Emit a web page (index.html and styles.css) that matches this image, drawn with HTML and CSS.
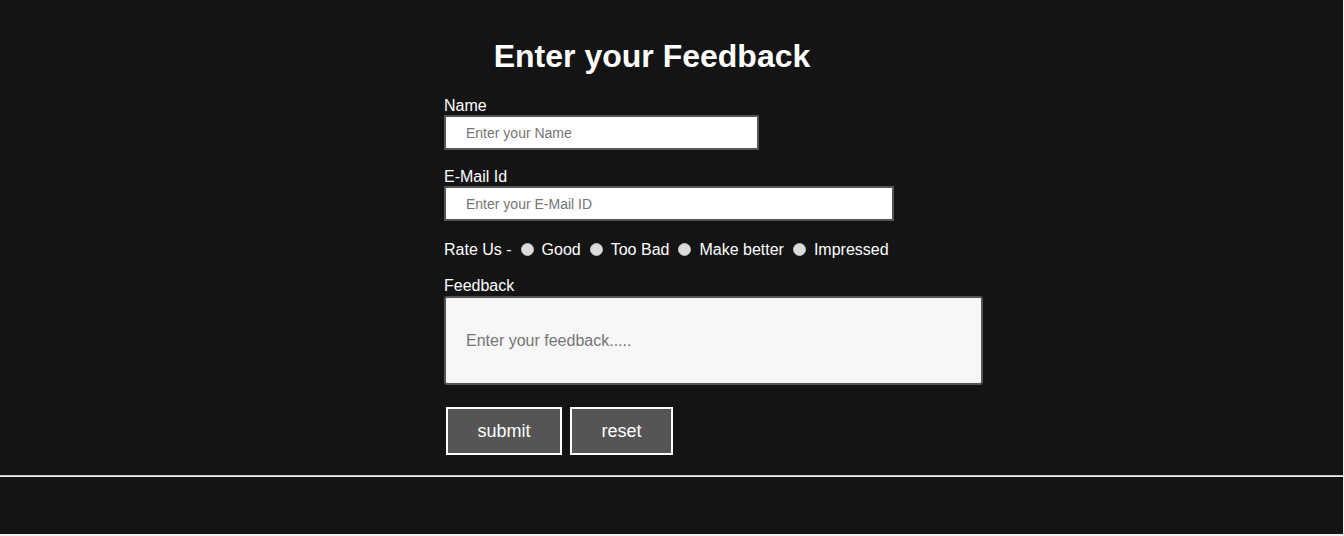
FILE: index.html
```html
<!DOCTYPE html>
<html lang="en">
<head>
<meta charset="utf-8">
<title>Feedback</title>
<link rel="stylesheet" href="styles.css">
</head>
<body>
<div class="page">
  <main class="content">
    <form class="form">
      <h1 class="title">Enter your Feedback</h1>
      <label class="label" for="name">Name</label>
      <input class="field field-name" id="name" type="text" placeholder="Enter your Name">
      <label class="label label-gap" for="email">E-Mail Id</label>
      <input class="field field-email" id="email" type="email" placeholder="Enter your E-Mail ID">
      <div class="rate">
        <span class="rate-title">Rate Us -</span>
        <label class="opt"><input class="radio" type="radio" name="rate"><span>Good</span></label>
        <label class="opt"><input class="radio" type="radio" name="rate"><span>Too Bad</span></label>
        <label class="opt"><input class="radio" type="radio" name="rate"><span>Make better</span></label>
        <label class="opt"><input class="radio" type="radio" name="rate"><span>Impressed</span></label>
      </div>
      <label class="label" for="fb">Feedback</label>
      <textarea class="area" id="fb" placeholder="Enter your feedback....."></textarea>
      <div class="actions">
        <button class="btn btn-submit" type="submit">submit</button>
        <button class="btn btn-reset" type="reset">reset</button>
      </div>
    </form>
  </main>
  <hr class="rule">
  <footer class="footer"></footer>
</div>
</body>
</html>
```

FILE: styles.css
```css
html, body {
  margin: 0;
  padding: 0;
}
body {
  background: #f0f0f0;
  font-family: "Liberation Sans", Arial, sans-serif;
  color: #ffffff;
}
.page {
  background: #141414;
  width: 1343px;
  height: 534px;
}
.content {
  padding-top: 38px;
  padding-left: 444px;
}
.form {
  display: flex;
  flex-direction: column;
  align-items: flex-start;
  width: 540px;
  margin: 0;
}
.title {
  width: 416px;
  margin: 0 0 22px 0;
  font-size: 32px;
  font-weight: bold;
  text-align: center;
  line-height: 37px;
}
.label {
  display: block;
  font-size: 16px;
  line-height: 18px;
}
.label-gap {
  margin-top: 18px;
}
.field {
  box-sizing: border-box;
  height: 35px;
  border: 2px solid #555555;
  background: #ffffff;
  padding: 0 20px;
  font-family: "Liberation Sans", Arial, sans-serif;
  font-size: 14px;
  color: #333;
  outline: none;
  margin: 0;
}
.field::placeholder {
  color: #757575;
}
.field-name { width: 315px; }
.field-email { width: 450px; }
.rate {
  display: flex;
  align-items: center;
  margin-top: 20px;
  height: 18px;
  font-size: 16px;
}
.rate-title {
  margin-right: 9px;
}
.opt {
  display: flex;
  align-items: center;
  margin-right: 9px;
}
.radio {
  appearance: none;
  -webkit-appearance: none;
  box-sizing: border-box;
  width: 13px;
  height: 13px;
  margin: -2px 8px 0 0;
  border-radius: 50%;
  background: #dcdcdc;
  border: 1px solid #c4c4c4;
}
.rate + .label {
  margin-top: 18px;
}
.area {
  box-sizing: border-box;
  width: 539px;
  height: 89px;
  margin: 1px 0 0 0;
  border: 2px solid #555555;
  border-radius: 3px;
  background: #f7f7f7;
  padding: 34px 20px 0 20px;
  font-family: "Liberation Sans", Arial, sans-serif;
  font-size: 16px;
  line-height: 18px;
  resize: none;
  outline: none;
  display: block;
}
.area::placeholder {
  color: #757575;
}
.actions {
  display: flex;
  gap: 8px;
  margin: 22px 0 0 2px;
}
.btn {
  box-sizing: border-box;
  height: 48px;
  background: #555555;
  border: 2px solid #ffffff;
  color: #ffffff;
  font-family: "Liberation Sans", Arial, sans-serif;
  font-size: 18px;
  padding: 0;
  margin: 0;
}
.btn-submit { width: 116px; }
.btn-reset { width: 103px; }
.rule {
  margin: 20px 0 0 0;
  height: 0;
  border: 0;
  border-top: 1px solid #c8c8c8;
  border-bottom: 1px solid #ececec;
}
.footer {
  height: 57px;
}
```
